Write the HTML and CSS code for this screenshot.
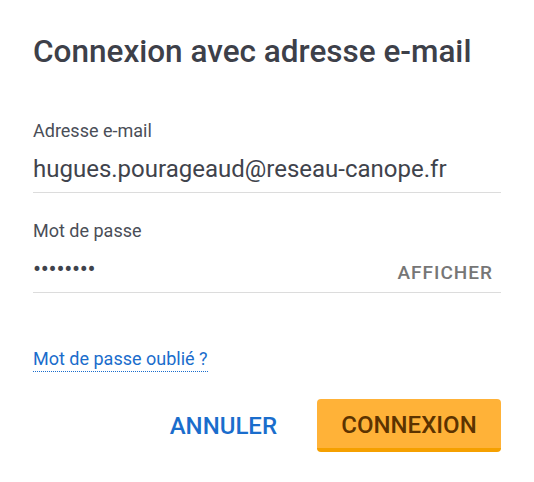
FILE: index.html
```html
<!DOCTYPE html>
<html lang="fr">
<head>
<meta charset="utf-8">
<link rel="stylesheet" href="styles.css">
</head>
<body>
<div class="dialog">
  <h1 class="title">Connexion avec adresse e-mail</h1>
  <div class="field field-email">
    <div class="label">Adresse e-mail</div>
    <div class="input-row"><span class="value">hugues.pourageaud@reseau-canope.fr</span></div>
  </div>
  <div class="field field-password">
    <div class="label">Mot de passe</div>
    <div class="input-row"><span class="value dots">••••••••</span><span class="show">AFFICHER</span></div>
  </div>
  <a class="forgot" href="#">Mot de passe oublié ?</a>
  <div class="actions">
    <button class="btn-cancel">ANNULER</button>
    <button class="btn-primary">CONNEXION</button>
  </div>
</div>
</body>
</html>
```
FILE: styles.css
```css
html, body {
  margin: 0;
  padding: 0;
  background: #ffffff;
}
body {
  font-family: Roboto, "Liberation Sans", sans-serif;
  color: #3c4049;
}
.dialog {
  width: 468px;
  padding: 32px 33px 0 33px;
  display: flex;
  flex-direction: column;
}
.title {
  margin: 0;
  font-size: 31.5px;
  font-weight: 500;
  line-height: 40px;
  color: #3d4049;
}
.field {
  display: flex;
  flex-direction: column;
}
.field-email {
  margin-top: 49px;
}
.field-password {
  margin-top: 28px;
}
.label {
  font-size: 18px;
  line-height: 20px;
  color: #4a4e57;
}
.input-row {
  display: flex;
  align-items: center;
  justify-content: space-between;
  padding: 14px 0 9px 0;
  border-bottom: 1px solid #dcdcdc;
}
.value {
  font-size: 24px;
  line-height: 28px;
  color: #3f434c;
}
.dots {
  letter-spacing: -0.3px;
}
.show {
  align-self: flex-end;
  font-size: 19px;
  line-height: 20px;
  font-weight: 500;
  letter-spacing: 1px;
  color: #767676;
  margin-right: 8px;
}
.forgot {
  align-self: flex-start;
  margin-top: 55px;
  padding-bottom: 1px;
  font-size: 18px;
  line-height: 22px;
  color: #1a6dcc;
  text-decoration: none;
  border-bottom: 1px dotted #1a6dcc;
}
.actions {
  display: flex;
  justify-content: flex-end;
  align-items: center;
  gap: 40px;
  margin-top: 27px;
}
.btn-cancel {
  background: none;
  border: none;
  padding: 0;
  font-family: Roboto, "Liberation Sans", sans-serif;
  font-size: 24px;
  font-weight: 500;
  color: #1a6dcc;
}
.btn-primary {
  width: 184px;
  height: 53px;
  padding: 3px 0 0 0;
  background: #ffb238;
  border: none;
  border-bottom: 4px solid #f5a000;
  border-radius: 4px;
  font-family: Roboto, "Liberation Sans", sans-serif;
  font-size: 24px;
  font-weight: 500;
  color: #5c3300;
}
```
